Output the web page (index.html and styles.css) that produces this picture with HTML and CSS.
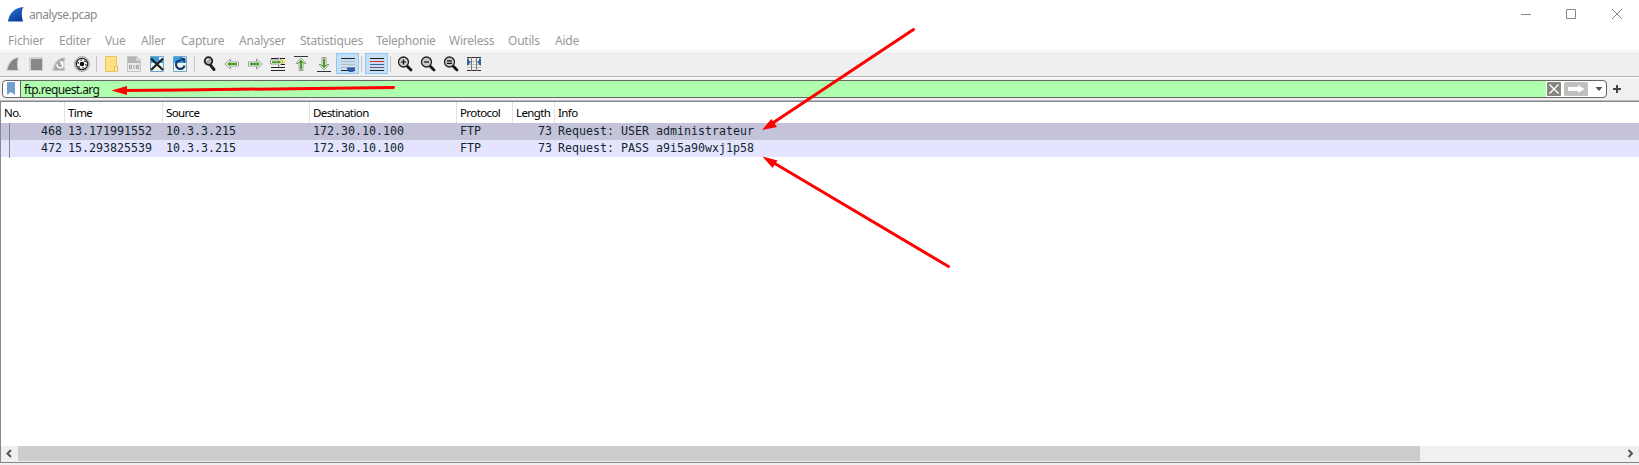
FILE: index.html
```html
<!DOCTYPE html>
<html lang="fr">
<head>
<meta charset="utf-8">
<title>analyse.pcap</title>
<link rel="stylesheet" href="styles.css">
</head>
<body>
<div class="window">
  <header class="titlebar">
    <svg class="logo" width="18" height="18" viewBox="0 0 18 18"><defs><linearGradient id="fin" x1="0" y1="0" x2="0.6" y2="1"><stop offset="0" stop-color="#2f7be0"/><stop offset="1" stop-color="#0c3c9c"/></linearGradient></defs><path d="M0 15.500C1 8 6 1.500 15.500 1c-2 3-2.300 8-.4 14.500z" fill="url(#fin)"/></svg>
    <span class="title">analyse.pcap</span>
    <svg class="controls" width="104" height="12" viewBox="0 0 104 12" fill="none" stroke="#888"><path d="M0 6.500h10M45.500 1.500h9v9h-9zM91 1l10 10M101 1L91 11"/></svg>
  </header>
  <nav class="menu"><span>Fichier</span><span>Editer</span><span>Vue</span><span>Aller</span><span>Capture</span><span>Analyser</span><span>Statistiques</span><span>Telephonie</span><span>Wireless</span><span>Outils</span><span>Aide</span></nav>
  <div class="toolbar">
    <svg class="tool" viewBox="0 0 23 21"><path d="M4 18C5 10 9 4.500 17.500 4c-2 4-2 9-.5 14z" fill="#d6d6d6"/><path d="M5.500 17C6.500 11 10 6 16 5c-1.300 4-1.300 8-.2 12z" fill="#858585"/></svg>
    <svg class="tool" viewBox="0 0 23 21"><path d="M4 4h14v14H4z" fill="#d2d2d2"/><path d="M6 6h11v11H6z" fill="#888"/></svg>
    <svg class="tool" viewBox="0 0 23 21"><path d="M4 18C5 10 9 4.500 18 4c-2 4-2 9-.5 14z" fill="#ccc"/><path d="M6 17C7 11 10 6 16 5c-1.300 4-1.300 8-.2 12z" fill="#a6a6a6"/><path d="M9.500 11a2.800 2.800 0 1 0 5 0M12 8.500l2.500 1-1.500 2" fill="none" stroke="#fff" stroke-width="1.500"/></svg>
    <svg class="tool" viewBox="0 0 23 21"><circle cx="11" cy="11" r="7.500" fill="#d8d8d8" stroke="#aaa"/><circle cx="11" cy="11" r="5.700" fill="#fff" stroke="#222" stroke-width="1.300"/><circle cx="11" cy="11" r="3.900" fill="none" stroke="#333" stroke-width="1.300" stroke-dasharray="1.600 2.480"/><circle cx="11" cy="11" r="2.300" fill="#111"/></svg>
    <i class="sep"></i>
    <svg class="tool" viewBox="0 0 23 21"><path d="M5.500 3.500h11v10h1v5h-12z" fill="#ffe184" stroke="#e9c55c"/><path d="M14.500 18v-4.500h3V18" fill="#fff0b6" stroke="#e3b94a"/></svg>
    <svg class="tool" viewBox="0 0 23 21"><path d="M4.500 3.500h9l4 4v11h-13z" fill="#e9e9e9" stroke="#c4c4c4"/><path d="M5 4h8.500l3.500 3.500V10H5z" fill="#b5b5b5"/><path d="M13 4v4h4" fill="#eee" stroke="#bbb"/><g fill="none" stroke="#999"><path d="M6.500 12.500h2v3h-2zM11 12v4M13.500 12.500h2v3h-2z"/></g></svg>
    <svg class="tool" viewBox="0 0 23 21"><path d="M4.500 3.500h13v15h-13z" fill="#f5f5e9" stroke="#6aa8d0"/><path d="M5 4h12v6H5z" fill="#3b9de0"/><path d="M13 4h4v3h-4z" fill="#e8f4fa"/><path d="M5 5.500l12 11.500M17 5.500L5 17" stroke="#202326" stroke-width="2.300"/></svg>
    <svg class="tool" viewBox="0 0 23 21"><path d="M4.500 3.500h13v15h-13z" fill="#f5f5e9" stroke="#6aa8d0"/><path d="M5 4h12v6H5z" fill="#3b9de0"/><path d="M13 4h4v3h-4z" fill="#e8f4fa"/><path d="M15.500 12.500a4.300 4.300 0 1 1-3-5" fill="none" stroke="#173b70" stroke-width="2.200"/><path d="M11 4.500l5.500.5-1 5z" fill="#173b70"/></svg>
    <i class="sep"></i>
    <svg class="tool" viewBox="0 0 23 21"><path d="M12 11.500l4 5" stroke="#222" stroke-width="3" stroke-linecap="round"/><circle cx="10.500" cy="8" r="3.800" fill="#aaa" stroke="#222" stroke-width="1.800"/><path d="M8.500 8a2 2 0 0 1 2-2" fill="none" stroke="#fff"/></svg>
    <svg class="tool" viewBox="0 0 23 21"><path d="M4 11l5.500-5v3H17.500v4H9.500v3z" fill="#fff" stroke="#999"/><path d="M6 11l3-2.500V10h7v2H9v1.500z" fill="#41a317"/></svg>
    <svg class="tool" viewBox="0 0 23 21"><path d="M18 11l-5.500-5v3H4.500v4h8v3z" fill="#fff" stroke="#999"/><path d="M16 11l-3-2.500V10H6v2h7v1.500z" fill="#41a317"/></svg>
    <svg class="tool" viewBox="0 0 23 21"><path d="M4 5.500h14M4 14.500h14M4 17.500h14" stroke="#222"/><path d="M12 8.500h6M12 11.500h6" stroke="#222"/><path d="M13 6.500h5v4h-5z" fill="#fce94f"/><path d="M16 9l-4.500-4.500V7h-8v4h8v2.500z" fill="#fff" stroke="#999"/><path d="M14.500 9L11.500 7v1.200H5v1.700h6.500V11z" fill="#41a317"/></svg>
    <svg class="tool" viewBox="0 0 23 21"><path d="M4 3.500h14" stroke="#333"/><path d="M11 5l5 5.500h-3v7H9v-7H6z" fill="#fff" stroke="#999"/><path d="M11 6.500l3 3.500h-2v6.500h-2V10H8z" fill="#41a317"/></svg>
    <svg class="tool" viewBox="0 0 23 21"><path d="M4 18.500h14" stroke="#333"/><path d="M11 17l5-5.500h-3v-7H9v7H6z" fill="#fff" stroke="#999"/><path d="M11 15.500l3-3.500h-2V5.500h-2V12H8z" fill="#41a317"/></svg>
    <svg class="tool active" viewBox="0 0 23 21"><path d="M5 5.500h14M5 17.500h14" stroke="#222"/><path d="M5 8.500h14M5 11.500h14M5 14.500h14" stroke="#b8bbb8"/><path d="M11 14.500h8v1.500l-2 3h-4l-2-3z" fill="#2c5da3"/></svg>
    <i class="sep"></i>
    <svg class="tool active" viewBox="0 0 23 21"><path d="M5 5.500h14M5 17.500h14" stroke="#222"/><path d="M5 8.500h14" stroke="#ef2929"/><path d="M5 11.500h14" stroke="#3465a4"/><path d="M5 14.500h14" stroke="#75507b"/></svg>
    <i class="sep"></i>
    <svg class="tool" viewBox="0 0 23 21"><path d="M13 13l4 4" stroke="#111" stroke-width="2.800" stroke-linecap="round"/><circle cx="9.500" cy="9" r="5" fill="#c8c8c8" stroke="#222" stroke-width="1.300"/><path d="M7 9h5M9.500 6.500v5" stroke="#111" stroke-width="1.200"/></svg>
    <svg class="tool" viewBox="0 0 23 21"><path d="M13 13l4 4" stroke="#111" stroke-width="2.800" stroke-linecap="round"/><circle cx="9.500" cy="9" r="5" fill="#c8c8c8" stroke="#222" stroke-width="1.300"/><path d="M7 9h5" stroke="#111" stroke-width="1.200"/></svg>
    <svg class="tool" viewBox="0 0 23 21"><path d="M13 13l4 4" stroke="#111" stroke-width="2.800" stroke-linecap="round"/><circle cx="9.500" cy="9" r="5" fill="#c8c8c8" stroke="#222" stroke-width="1.300"/><path d="M7 7.800h5M7 10.300h5" stroke="#111" stroke-width="1.200"/></svg>
    <svg class="tool" viewBox="0 0 23 21"><path d="M4 4.500h14M4 17.500h14" stroke="#333"/><path d="M4 8.500h14M4 11.500h14M4 14.500h14" stroke="#c3c7c0"/><path d="M8.500 4v14M13.500 4v14" stroke="#777"/><path d="M4 6l4 3-4 4zM18 6l-4 3 4 4z" fill="#3465a4"/><path d="M5 5.500v6.500M17 5.500v6.500" stroke="#3465a4" stroke-width="2"/></svg>
  </div>
  <div class="filterbar">
    <div class="filter">
      <span class="bookmark"><svg width="8" height="13" viewBox="0 0 8 13"><path d="M0 0h8v13L4 10l-4 3z" fill="#729fcf"/></svg></span>
      <span class="expression">ftp.request.arg</span>
      <svg class="actions" width="60" height="16" viewBox="0 0 60 16"><rect x="1" y="1" width="14" height="14" rx="1" fill="#84877f"/><path d="M3.500 3.500l9 9M12.500 3.500l-9 9" stroke="#fff" stroke-width="1.400"/><rect x="18" y="1" width="24" height="14" rx="1.500" fill="#bfbfbf"/><path d="M22 6h10V4l6.500 4-6.500 4v-2H22z" fill="#fff"/><path d="M49.500 6h7L53 10z" fill="#555"/></svg>
    </div>
    <svg class="add" width="8" height="8" viewBox="0 0 8 8"><path d="M0 4h8M4 0v8" stroke="#444" stroke-width="2"/></svg>
  </div>
  <main class="packets">
    <div class="row head"><span>No.</span><span>Time</span><span>Source</span><span>Destination</span><span>Protocol</span><span>Length</span><span>Info</span></div>
    <div class="row packet selected"><span class="num">468</span><span>13.171991552</span><span>10.3.3.215</span><span>172.30.10.100</span><span>FTP</span><span class="num">73</span><span>Request: USER administrateur</span></div>
    <div class="row packet"><span class="num">472</span><span>15.293825539</span><span>10.3.3.215</span><span>172.30.10.100</span><span>FTP</span><span class="num">73</span><span>Request: PASS a9i5a90wxj1p58</span></div>
    <div class="blank"></div>
    <div class="scrollbar">
      <svg width="17" height="15" viewBox="0 0 17 15"><path d="M10 4L6.500 7.500 10 11" fill="none" stroke="#555" stroke-width="2"/></svg>
      <div class="track"><div class="thumb"></div></div>
      <svg width="17" height="15" viewBox="0 0 17 15"><path d="M6.500 4L10 7.500 6.500 11" fill="none" stroke="#555" stroke-width="2"/></svg>
    </div>
  </main>
  <svg class="marks" width="1639" height="465" viewBox="0 0 1639 465" fill="#f00" stroke="#f00" stroke-width="3" stroke-linecap="round"><path d="M121 90.500L180 90 393.500 87.500M772 123.500L913.500 29.500M774 163L948.500 266.500"/><path stroke="none" d="M111.500 90.500L127 86v9zM762 130L771.300 119l5.700 8zM762.500 156.500l15 4-5 7.500z"/></svg>
</div>
</body>
</html>
```
FILE: styles.css
```css
* { box-sizing: border-box; }
body { margin: 0; }
.window { position: relative; width: 1639px; height: 465px; display: flex; flex-direction: column; background: #fff; font: 12px/18px "Noto Sans", "Open Sans", sans-serif; overflow: hidden; white-space: nowrap; }
.titlebar { height: 30px; display: flex; padding: 6px 14px 0 8px; color: #888; }
.logo { margin-right: 3px; }
.controls { margin: 2px 0 0 auto; }
.title { letter-spacing: -0.42px; }
.menu { height: 21px; border-bottom: 1px solid #f0f0f0; padding: 2px 0 0 8px; color: #999; letter-spacing: -0.22px; display: grid; grid-template-columns: 51px 46px 36px 40px 58px 61px 76px 73px 59px 47px 60px; }
.toolbar { height: 26px; margin-top: 1px; padding: 1px 0 0 2px; display: flex; background: #efefef; border-bottom: 1px solid #fff; box-shadow: inset 0 -1px #b4b4b4; }
.tool { width: 23px; height: 21px; }
.active { background: #c3def5; outline: 1px solid #90c8f6; outline-offset: -1px; }
.sep { width: 6px; height: 16px; margin-top: 3px; background: linear-gradient(#c8c8c8, #c8c8c8) 2px 0 / 1px 100% no-repeat; }
.filterbar { height: 23px; padding: 2px 0 0 2px; display: flex; background: #f0f0f0; box-shadow: inset 0 -1px #bbb; }
.filter { width: 1605px; height: 18px; border: 1px solid #666; border-radius: 4px; display: flex; background: #fff; overflow: hidden; }
.bookmark { width: 18px; border-right: 1px solid #666; padding: 1px 0 0 4px; line-height: 0; }
.expression { flex: 1; background: #afffaf; padding-left: 3px; line-height: 18px; color: #111; letter-spacing: -0.6px; }
.add { margin: 5px 0 0 6px; }
.packets { height: 362px; border: 1px solid #828790; border-right: 0; display: flex; flex-direction: column; }
.row { display: grid; grid-template-columns: 64px 98px 147px 147px 56px 42px 1fr; }
.head { height: 21px; line-height: 22px; font-size: 11.5px; letter-spacing: -0.6px; color: #000; }
.head span { padding-left: 3px; border-right: 1px solid #e2e2e2; }
.head span:last-child { border: 0; }
.packet { height: 17px; font: 11.63px/17px "DejaVu Sans Mono", monospace; color: #12272e; background: #e4e4ff linear-gradient(#828790, #828790) 8px 0 / 1px 100% no-repeat; }
.packet span { padding-left: 3px; }
.packet .num { text-align: right; padding-right: 3px; }
.selected { background-color: #c5c3da; }
.blank { flex: 1; background: linear-gradient(#828790, #828790) 8px 0 / 1px 1px no-repeat; }
.scrollbar { height: 16px; display: flex; background: #f0f0f0; }
.track { flex: 1; }
.thumb { width: 1402px; height: 15px; background: #cdcdcd; }
.marks { position: absolute; left: 0; top: 0; }
.window::after { content: ""; flex: 1; background: #f0f0f0; }
```
